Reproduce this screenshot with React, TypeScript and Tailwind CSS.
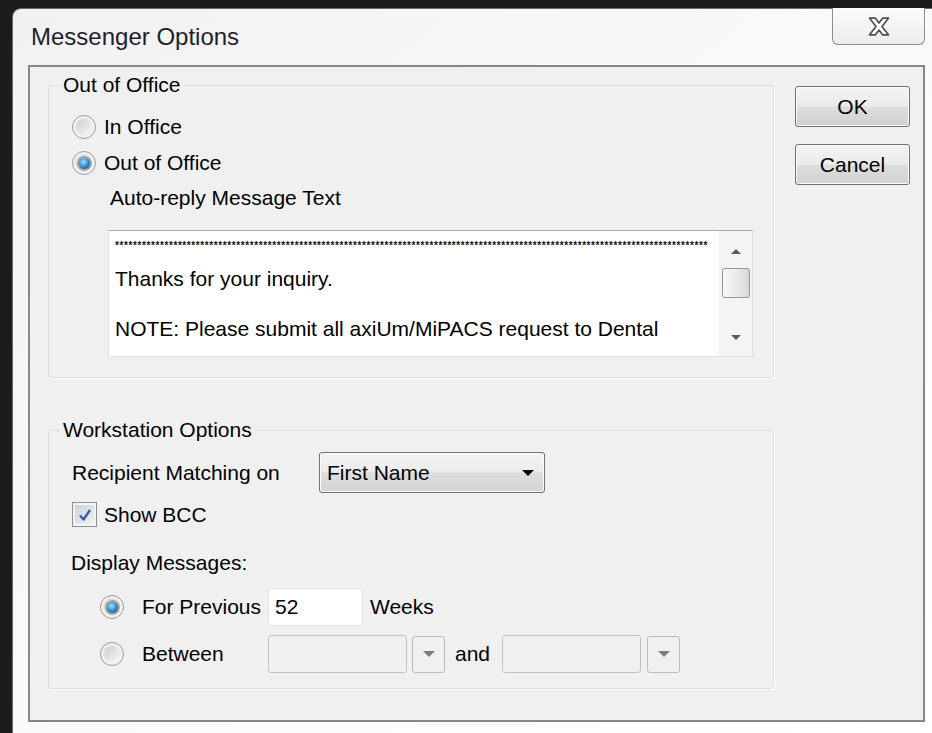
import React from 'react';

const sans = "font-['Liberation_Sans',Arial,sans-serif]";

const Radio: React.FC<{ checked?: boolean }> = ({ checked }) => (
  <span className="flex h-[24px] w-[24px] shrink-0 items-center justify-center rounded-full border border-[#9c9c9c] bg-linear-to-br from-[#d4d4d4] to-[#fbfbfb] shadow-[inset_0_0_0_2px_#f3f3f3]">
    {checked ? (
      <span className="flex h-[15px] w-[15px] items-center justify-center rounded-full bg-[#5e5e5e]/50">
        <span className="h-[11px] w-[11px] rounded-full bg-[radial-gradient(circle_at_40%_35%,#9edcff,#2b86c9_55%,#0c4b82)]" />
      </span>
    ) : (
      <span className="h-[14px] w-[14px] rounded-full bg-linear-to-br from-[#cdcdcd] to-[#f7f7f7]" />
    )}
  </span>
);

const Checkbox: React.FC = () => (
  <span className="flex h-[25px] w-[25px] shrink-0 items-center justify-center border border-[#8e8f8f] bg-[#f4f4f4] p-[2px]">
    <span className="flex h-full w-full items-center justify-center bg-linear-to-br from-[#cbd3dc] to-[#eef2f6]">
      <svg width="14" height="14" viewBox="0 0 14 14">
        <path d="M2 7.5 L5.5 11.5 L12 2" fill="none" stroke="#3b5ea8" strokeWidth="2.4" strokeLinejoin="round" />
      </svg>
    </span>
  </span>
);

const Arrow: React.FC<{ color: string; up?: boolean; w?: number }> = ({ color, up, w = 11 }) => (
  <svg width={w} height={Math.round(w / 2)} viewBox="0 0 10 5" className="shrink-0">
    <path d={up ? 'M0 5 L5 0 L10 5 Z' : 'M0 0 L10 0 L5 5 Z'} fill={color} />
  </svg>
);

const PushButton: React.FC<{ label: string; className?: string }> = ({ label, className = '' }) => (
  <button
    className={`flex h-[41px] w-[115px] items-center justify-center rounded-[3px] border border-[#707070] bg-[linear-gradient(#f3f3f3_0%,#ececec_48%,#dedede_52%,#d0d0d0_100%)] text-[21px] text-black shadow-[inset_0_0_0_1px_#fbfbfb] ${className}`}
  >
    {label}
  </button>
);

const DropButton: React.FC = () => (
  <span className="flex h-[37px] w-[33px] shrink-0 items-center justify-center rounded-[3px] border border-[#bcbcbc] bg-[#f0f0f0]">
    <Arrow color="#7c7c7c" w={12} />
  </span>
);

const App: React.FC = () => {
  return (
    <div className={`h-[733px] w-[932px] overflow-hidden bg-[#1c1c1c] pl-[12px] pt-[8px] ${sans}`}>
      <div className="flex h-[725px] w-[920px] flex-col rounded-tl-[9px] border-l border-t border-[#6a6a6a] bg-linear-to-br from-[#f1f1f1] via-[#fafafa] to-[#ffffff]">
        {/* title bar */}
        <div className="flex h-[56px] items-start justify-between">
          <div className="mt-[14px] pl-[18px] text-[24px] leading-[28px] text-[#1e1e2e]">Messenger Options</div>
          <button className="mr-[7px] -mt-px flex h-[37px] w-[93px] items-center justify-center rounded-b-[6px] border-x border-b border-[#8d8d8d] bg-linear-to-b from-[#fbfbfb] to-[#ececec]">
            <svg width="24" height="19" viewBox="0 0 20 16">
              <path
                d="M2 1 H7 L10 5 L13 1 H18 L12.5 8 L18 15 H13 L10 11 L7 15 H2 L7.5 8 Z"
                fill="#ffffff"
                stroke="#4d4d4d"
                strokeWidth="1.4"
                strokeLinejoin="round"
              />
            </svg>
          </button>
        </div>

        {/* client area */}
        <div className="ml-[15px] flex h-[657px] w-[897px] items-start border-2 border-[#878787] bg-[#f0f0f0] pl-[18px] text-[21px] leading-[24px] text-black">
          <div className="flex w-[726px] flex-col">
            <fieldset className="mt-[6px] rounded-[3px] border border-[#d5dfe5] shadow-[1px_1px_0_#ffffff]">
              <legend className="ml-[11px] px-[3px] leading-[24px]">Out of Office</legend>
              <div className="pb-[20px] pl-[23px] pt-[18px]">
                <div className="flex h-[24px] items-center gap-[8px]">
                  <Radio />
                  <span>In Office</span>
                </div>
                <div className="mt-[12px] flex h-[24px] items-center gap-[8px]">
                  <Radio checked />
                  <span>Out of Office</span>
                </div>
                <div className="mt-[11px] pl-[38px]">Auto-reply Message Text</div>
                <div className="ml-[36px] mt-[20px] flex h-[127px] w-[645px] border border-[#dbdfe6] border-t-[#abadb3] bg-white">
                  <div className="flex-1 overflow-hidden pl-[6px] pt-[10px] leading-[25px]">
                    <div className="h-[25px] text-[10px] font-bold leading-[10px] tracking-[0.6px] whitespace-nowrap text-[#111]">
                      {'*'.repeat(132)}
                    </div>
                    <div>Thanks for your inquiry.</div>
                    <div className="h-[25px]" />
                    <div>NOTE: Please submit all axiUm/MiPACS request to Dental</div>
                  </div>
                  <div className="flex w-[33px] flex-col items-center bg-[#f4f4f4] pb-[16px] pt-[18px]">
                    <Arrow color="#5a5a5a" up w={10} />
                    <div className="mt-[14px] h-[30px] w-[28px] rounded-[3px] border border-[#979797] bg-linear-to-r from-[#f7f7f7] via-[#ececec] to-[#d6d6d6]" />
                    <div className="flex-1" />
                    <Arrow color="#5a5a5a" w={10} />
                  </div>
                </div>
              </div>
            </fieldset>

            <fieldset className="mt-[40px] rounded-[3px] border border-[#d5dfe5] shadow-[1px_1px_0_#ffffff]">
              <legend className="ml-[11px] px-[3px] leading-[24px]">Workstation Options</legend>
              <div className="pb-[15px] pl-[23px] pt-[10px]">
                <div className="flex h-[41px] items-center">
                  <span className="w-[247px]">Recipient Matching on</span>
                  <div className="flex h-[41px] w-[226px] items-center justify-between rounded-[3px] border border-[#707070] bg-[linear-gradient(#f3f3f3_0%,#ececec_48%,#dedede_52%,#d3d3d3_100%)] pl-[7px] pr-[10px] shadow-[inset_0_0_0_1px_#fbfbfb]">
                    <span>First Name</span>
                    <Arrow color="#000" w={12} />
                  </div>
                </div>
                <div className="mt-[9px] flex h-[25px] items-center gap-[7px]">
                  <Checkbox />
                  <span>Show BCC</span>
                </div>
                <div className="-ml-px mt-[24px]">Display Messages:</div>
                <div className="mt-[13px] flex h-[38px] items-center pl-[28px]">
                  <Radio checked />
                  <span className="ml-[18px] w-[126px]">For Previous</span>
                  <div className="flex h-[38px] w-[95px] items-center rounded-[2px] border border-[#e2e3ea] bg-white pl-[6px]">52</div>
                  <span className="ml-[7px]">Weeks</span>
                </div>
                <div className="mt-[9px] flex h-[38px] items-center pl-[28px]">
                  <Radio />
                  <span className="ml-[18px] w-[126px]">Between</span>
                  <div className="h-[38px] w-[139px] rounded-[3px] border border-[#c3c3c3] bg-[#f0f0f0]" />
                  <span className="ml-[5px]">
                    <DropButton />
                  </span>
                  <span className="ml-[10px] w-[47px]">and</span>
                  <div className="h-[38px] w-[139px] rounded-[3px] border border-[#c3c3c3] bg-[#f0f0f0]" />
                  <span className="ml-[6px]">
                    <DropButton />
                  </span>
                </div>
              </div>
            </fieldset>
          </div>

          <div className="ml-[21px] mt-[19px] flex flex-col">
            <PushButton label="OK" />
            <PushButton label="Cancel" className="mt-[17px]" />
          </div>
        </div>
      </div>
    </div>
  );
};

export default App;
